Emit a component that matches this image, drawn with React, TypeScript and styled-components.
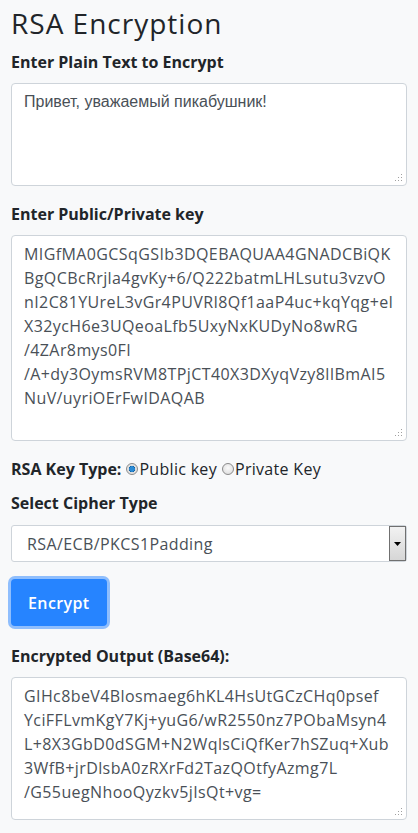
import React from "react";
import styled, { createGlobalStyle } from "styled-components";

const GlobalStyle = createGlobalStyle`
  html, body {
    margin: 0;
    padding: 0;
    background: #f8f9fa;
  }
  body {
    font-family: "Open Sans", "Liberation Sans", sans-serif;
    color: #212529;
  }
`;

const plainText = "Привет, уважаемый пикабушник!";

const keyText = [
  "MIGfMA0GCSqGSIb3DQEBAQUAA4GNADCBiQK",
  "BgQCBcRrjla4gvKy+6/Q222batmLHLsutu3vzvO",
  "nI2C81YUreL3vGr4PUVRI8Qf1aaP4uc+kqYqg+eI",
  "X32ycH6e3UQeoaLfb5UxyNxKUDyNo8wRG",
  "/4ZAr8mys0FI",
  "/A+dy3OymsRVM8TPjCT40X3DXyqVzy8lIBmAI5",
  "NuV/uyriOErFwIDAQAB",
].join("\n");

const outputText = [
  "GIHc8beV4Blosmaeg6hKL4HsUtGCzCHq0psef",
  "YciFFLvmKgY7Kj+yuG6/wR2550nz7PObaMsyn4",
  "L+8X3GbD0dSGM+N2WqlsCiQfKer7hSZuq+Xub",
  "3WfB+jrDlsbA0zRXrFd2TazQOtfyAzmg7L",
  "/G55uegNhooQyzkv5jIsQt+vg=",
].join("\n");

const Grip = () => (
  <GripMark width="8" height="8" viewBox="0 0 8 8">
    <rect x="6" y="0" width="1" height="1" />
    <rect x="3" y="3" width="1" height="1" />
    <rect x="6" y="3" width="1" height="1" />
    <rect x="0" y="6" width="1" height="1" />
    <rect x="3" y="6" width="1" height="1" />
    <rect x="6" y="6" width="1" height="1" />
  </GripMark>
);

type AreaProps = { height: number; plain?: boolean; value: string };

const Area = ({ height, plain, value }: AreaProps) => (
  <AreaWrap>
    <TextArea $height={height} $plain={plain} defaultValue={value} spellCheck={false} />
    <Grip />
  </AreaWrap>
);

const App = () => {
  return (
    <>
      <GlobalStyle />
      <Page>
        <Title>RSA Encryption</Title>

        <Label>Enter Plain Text to Encrypt</Label>
        <Area height={103} plain value={plainText} />

        <Label>Enter Public/Private key</Label>
        <Area height={206} value={keyText} />

        <RadioRow>
          <RadioTitle>RSA Key Type:</RadioTitle>
          <RadioOption>
            <Radio type="radio" name="keytype" defaultChecked />
            Public key
          </RadioOption>
          <RadioOption>
            <Radio type="radio" name="keytype" />
            Private Key
          </RadioOption>
        </RadioRow>

        <Label>Select Cipher Type</Label>
        <SelectBox>
          <Select defaultValue="RSA/ECB/PKCS1Padding">
            <option>RSA/ECB/PKCS1Padding</option>
            <option>RSA/ECB/OAEPWithSHA-1AndMGF1Padding</option>
            <option>RSA/ECB/OAEPWithSHA-256AndMGF1Padding</option>
          </Select>
          <SelectArrow>
            <svg width="7" height="4" viewBox="0 0 7 4">
              <path d="M0 0h7L3.5 4z" fill="#000" />
            </svg>
          </SelectArrow>
        </SelectBox>

        <Button type="button">Encrypt</Button>

        <Label>Encrypted Output (Base64):</Label>
        <Area height={143} value={outputText} />
      </Page>
    </>
  );
};

export default App;

const Page = styled.div`
  padding: 2px 11px 10px;
  display: flex;
  flex-direction: column;
  align-items: flex-start;
`;

const Title = styled.h2`
  margin: 0 0 6px;
  font-size: 28px;
  line-height: 42px;
  font-weight: 500;
  letter-spacing: 1px;
  color: #212529;
`;

const Label = styled.label`
  display: block;
  font-size: 16px;
  line-height: 24px;
  font-weight: 700;
  margin-bottom: 9px;
`;

const AreaWrap = styled.div`
  position: relative;
  width: 100%;
  margin: 0 0 16px;
`;

const TextArea = styled.textarea<{ $height: number; $plain?: boolean }>`
  display: block;
  box-sizing: border-box;
  width: 100%;
  height: ${(p) => p.$height}px;
  margin: 0;
  padding: 6px 12px;
  border: 1px solid #ced4da;
  border-radius: 4px;
  background: #fff;
  color: #495057;
  font-family: ${(p) =>
    p.$plain ? '"Liberation Sans", Arial, sans-serif' : '"Open Sans", sans-serif'};
  font-size: 16px;
  letter-spacing: ${(p) => (p.$plain ? 0 : 0.4)}px;
  line-height: 24px;
  white-space: pre;
  overflow: hidden;
  resize: none;
  outline: none;
`;

const GripMark = styled.svg`
  position: absolute;
  right: 4px;
  bottom: 4px;
  fill: #a0a0a0;
`;

const RadioRow = styled.div`
  display: flex;
  align-items: center;
  font-size: 16px;
  line-height: 24px;
  margin: 0 0 10px;
`;

const RadioTitle = styled.span`
  font-weight: 700;
  margin-right: 5px;
`;

const RadioOption = styled.label`
  display: flex;
  align-items: center;
  font-size: 16px;
  letter-spacing: 0.3px;
  color: #212529;
  margin-right: 5px;
`;

const Radio = styled.input`
  appearance: none;
  box-sizing: border-box;
  width: 12px;
  height: 12px;
  margin: 0 1px 0 0;
  border-radius: 50%;
  border: 1px solid #8a8a8a;
  background: radial-gradient(circle at 50% 40%, #fafafa 0%, #d8d8d8 100%);
  &:checked {
    background: radial-gradient(circle, #2a8ad4 0 2.5px, #0b5c9e 3px, #dcdcdc 3.5px, #f2f2f2 100%);
  }
`;

const SelectBox = styled.div`
  box-sizing: border-box;
  width: 100%;
  height: 37px;
  display: flex;
  align-items: stretch;
  background: #fff;
  border: 1px solid #ced4da;
  border-radius: 3px;
  margin: 1px 0 17px;
`;

const Select = styled.select`
  appearance: none;
  flex: 1 1 auto;
  min-width: 0;
  border: none;
  outline: none;
  background: transparent;
  padding: 0 15px;
  font-family: "Open Sans", sans-serif;
  font-size: 16px;
  letter-spacing: 0.4px;
  color: #495057;
`;

const SelectArrow = styled.span`
  box-sizing: border-box;
  flex: 0 0 17px;
  display: flex;
  align-items: center;
  justify-content: center;
  border: 1px solid #707070;
  background: linear-gradient(#f2f2f2, #d6d6d6);
`;

const Button = styled.button`
  box-sizing: border-box;
  height: 47px;
  padding: 0 17px;
  margin-bottom: 18px;
  border: none;
  border-radius: 4px;
  background: #2684ff;
  color: #fff;
  font-family: "Open Sans", sans-serif;
  font-size: 16px;
  font-weight: 600;
  letter-spacing: 0.4px;
  box-shadow: 0 0 0 3px rgba(38, 132, 255, 0.5);
  cursor: pointer;
`;
